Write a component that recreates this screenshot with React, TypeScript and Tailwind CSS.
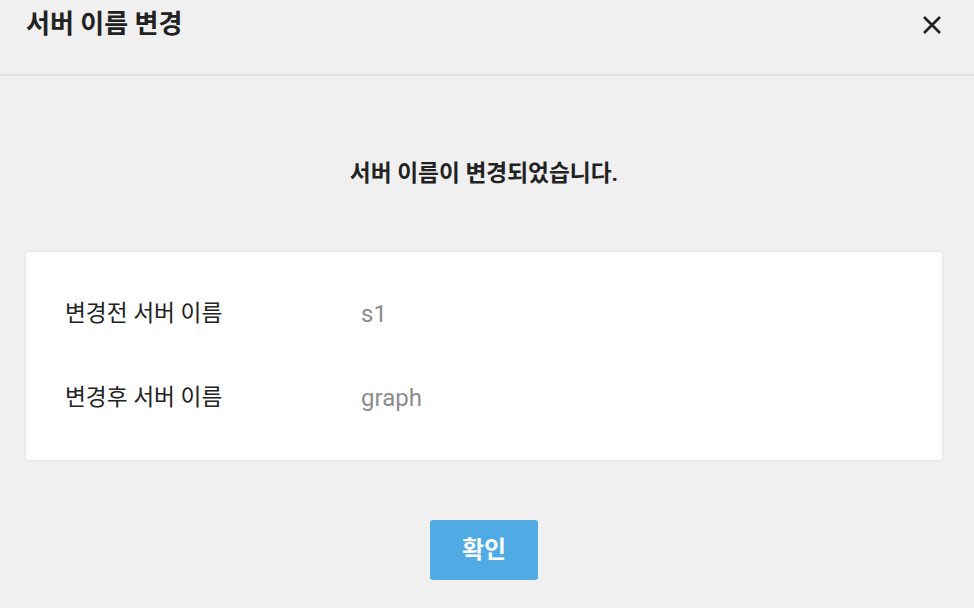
import React from "react";

export default function App() {
  return (
    <div
      className="w-[974px] h-[608px] bg-[#f0f0f0] flex flex-col overflow-hidden"
      style={{ fontFamily: 'Roboto, "Noto Sans CJK KR", sans-serif' }}
    >
      <div className="h-[76px] shrink-0 border-b-2 border-[#e2e2e2] flex items-start justify-between pl-[26px] pr-[31px] pt-[4px]">
        <h1 className="text-[26px] font-bold text-[#222] leading-[40px]">서버 이름 변경</h1>
        <svg width="22" height="22" viewBox="0 0 22 22" className="mt-[10px]">
          <path d="M3 3 L19 19 M19 3 L3 19" stroke="#222" strokeWidth="2.6" strokeLinecap="butt" />
        </svg>
      </div>
      <div className="flex-1 w-[968px] flex flex-col items-center">
        <p className="mt-[83px] text-[22.7px] font-bold text-[#222] leading-[30px]">서버 이름이 변경되었습니다.</p>
        <div className="mt-[62px] w-[918px] h-[210px] shrink-0 bg-white rounded-[4px] border border-[#e6e6e6] flex flex-col justify-center gap-[54px] pl-[39px]">
          <div className="flex items-center text-[22.7px] leading-[30px]">
            <span className="w-[296px] text-[#222]">변경전 서버 이름</span>
            <span className="text-[24px] text-[#8c8c8c]">s1</span>
          </div>
          <div className="flex items-center text-[22.7px] leading-[30px]">
            <span className="w-[296px] text-[#222]">변경후 서버 이름</span>
            <span className="text-[24px] text-[#8c8c8c]">graph</span>
          </div>
        </div>
        <button className="mt-[59px] w-[108px] h-[60px] bg-[#50abe4] rounded-[3px] text-white text-[24px] font-bold">
          확인
        </button>
      </div>
    </div>
  );
}
